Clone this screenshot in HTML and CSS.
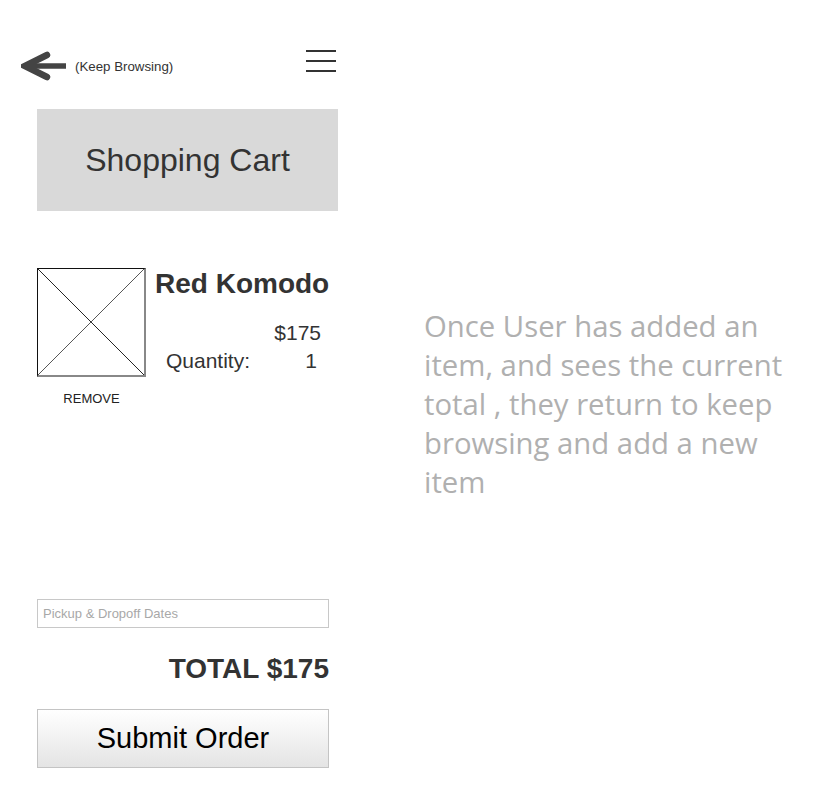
FILE: index.html
```html
<!DOCTYPE html>
<html>
<head>
<meta charset="utf-8">
<link rel="stylesheet" href="styles.css">
</head>
<body>
<div class="page">
  <div class="phone">
    <div class="topbar">
      <div class="back">
        <svg class="arrow" width="46" height="30" viewBox="0 0 46 30">
          <path d="M26 4 L4 15 L26 26" fill="none" stroke="#444" stroke-width="6.5" stroke-linecap="round" stroke-linejoin="miter"/>
          <path d="M6 15 H45" stroke="#444" stroke-width="5.5"/>
        </svg>
        <span class="back-label">(Keep Browsing)</span>
      </div>
      <div class="menu">
        <span class="bar"></span><span class="bar"></span><span class="bar"></span>
      </div>
    </div>

    <div class="title-box">Shopping Cart</div>

    <div class="item">
      <div class="item-left">
        <div class="thumb">
          <svg width="107" height="107" viewBox="0 0 107 107">
            <line x1="0" y1="0" x2="107" y2="107" stroke="#222" stroke-width="1"/>
            <line x1="107" y1="0" x2="0" y2="107" stroke="#555" stroke-width="1"/>
          </svg>
        </div>
        <div class="remove">REMOVE</div>
      </div>
      <div class="item-info">
        <div class="item-name">Red Komodo</div>
        <div class="item-price">$175</div>
        <div class="item-qty"><span>Quantity:</span><span>1</span></div>
      </div>
    </div>

    <div class="dates">Pickup &amp; Dropoff Dates</div>
    <div class="total">TOTAL $175</div>
    <div class="submit">Submit Order</div>
  </div>

  <div class="note">Once User has added an item, and sees the current total , they return to keep browsing and add a new item</div>
</div>
</body>
</html>
```

FILE: styles.css
```css
* { box-sizing: border-box; }
html, body { margin: 0; padding: 0; background: #fff; }
body { font-family: "Liberation Sans", Arial, sans-serif; color: #333; }

.page { display: flex; align-items: flex-start; width: 824px; height: 812px; }

.phone { width: 338px; margin-left: 21px; padding-top: 49px; }

.topbar { display: flex; justify-content: space-between; align-items: flex-start; width: 315px; height: 60px; }
.back { display: flex; align-items: center; margin-top: 2px; }
.arrow { display: block; }
.back-label { font-size: 13.3px; color: #333; margin-left: 8px; }
.menu { display: flex; flex-direction: column; gap: 8px; width: 30px; margin-top: 1px; }
.bar { display: block; height: 2px; background: #333; }

.title-box {
  margin-left: 16px; width: 301px; height: 102px;
  background: #d9d9d9; color: #333;
  display: flex; align-items: center; justify-content: center;
  font-size: 32px;
}

.item { display: flex; margin-left: 16px; margin-top: 57px; }
.item-left { width: 109px; display: flex; flex-direction: column; align-items: center; }
.thumb {
  width: 109px; height: 109px;
  border-top: 1px solid #111; border-left: 1px solid #111;
  border-right: 2px solid #888; border-bottom: 2px solid #888;
}
.thumb svg { display: block; width: 106px; height: 106px; }
.remove { font-size: 13px; color: #222; margin-top: 14px; line-height: 16px; }

.item-info { width: 180px; margin-left: 9px; }
.item-name { font-size: 28px; font-weight: bold; line-height: 32px; color: #333; white-space: nowrap; }
.item-price { font-size: 21px; line-height: 26px; text-align: right; padding-right: 14px; margin-top: 20px; color: #333; }
.item-qty { display: flex; justify-content: space-between; font-size: 21px; line-height: 26px; margin-top: 2px; padding-left: 11px; padding-right: 18px; color: #333; }

.dates {
  margin-left: 16px; margin-top: 192px; width: 292px; height: 29px;
  border: 1px solid #c8c8c8; color: #a8a8a8; font-size: 13px;
  display: flex; align-items: center; padding-left: 5px;
}
.total { margin-left: 16px; width: 292px; text-align: right; font-size: 28px; font-weight: bold; line-height: 32px; margin-top: 25px; color: #333; }
.submit {
  margin-left: 16px; margin-top: 24px; width: 292px; height: 59px;
  border: 1px solid #c4c4c4;
  background: linear-gradient(#ffffff, #e4e4e4);
  display: flex; align-items: center; justify-content: center;
  font-size: 29px; color: #000;
}

.note {
  margin-left: 65px; margin-top: 307px; width: 390px;
  font-family: "Open Sans", sans-serif; font-size: 29.3px; line-height: 39px; color: #b0b0b0;
}
```
